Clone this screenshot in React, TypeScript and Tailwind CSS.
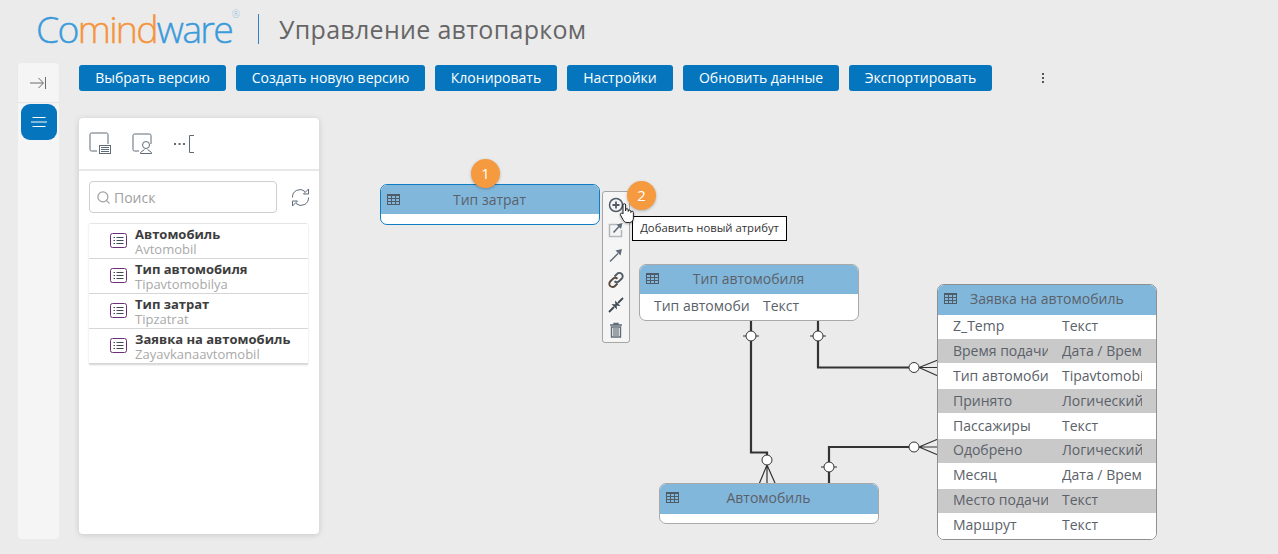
import { Search } from "lucide-react";

const toolbarButtons = [
  { label: "Выбрать версию", width: "w-[147px]" },
  { label: "Создать новую версию", width: "w-[189px]" },
  { label: "Клонировать", width: "w-[122px]" },
  { label: "Настройки", width: "w-[106px]" },
  { label: "Обновить данные", width: "w-[156px]" },
  { label: "Экспортировать", width: "w-[143px]" },
];

const templates = [
  { name: "Автомобиль", alias: "Avtomobil" },
  { name: "Тип автомобиля", alias: "Tipavtomobilya" },
  { name: "Тип затрат", alias: "Tipzatrat" },
  { name: "Заявка на автомобиль", alias: "Zayavkanaavtomobil" },
];

const requestRows = [
  ["Z_Temp", "Текст"],
  ["Время подачи", "Дата / Время"],
  ["Тип автомобиля", "Tipavtomobilya"],
  ["Принято", "Логический"],
  ["Пассажиры", "Текст"],
  ["Одобрено", "Логический"],
  ["Месяц", "Дата / Время"],
  ["Место подачи", "Текст"],
  ["Маршрут", "Текст"],
];

function TableIcon() {
  return (
    <svg width="13" height="11" viewBox="0 0 13 11" fill="none" stroke="#4f5b66" strokeWidth="1" className="shrink-0">
      <rect x="0.5" y="0.5" width="12" height="10" />
      <path d="M0.5 1.5H12.5M0.5 4.5H12.5M0.5 7.5H12.5M4.5 0.5V10.5M8.5 0.5V10.5" />
    </svg>
  );
}

function ListIcon() {
  return (
    <svg width="18" height="16" viewBox="0 0 18 16" fill="none" className="shrink-0">
      <rect x="0.5" y="0.5" width="16" height="14" rx="2" stroke="#6b2f78" />
      <path d="M6.5 4.5H13.5M6.5 7.5H13.5M6.5 10.5H13.5" stroke="#3f4a55" />
      <path d="M3.5 4.5H5M3.5 7.5H5M3.5 10.5H5" stroke="#3f4a55" />
    </svg>
  );
}

function Wires() {
  const line = "#333";
  const circles = [
    [751, 336],
    [818, 336],
    [829, 467],
  ];
  const ends = [
    [767, 460],
    [914, 367.5],
    [914, 447],
  ];
  return (
    <svg width="1278" height="554" className="absolute left-0 top-0" fill="none">
      <path d="M751 320V452.5H767V460" stroke={line} strokeWidth="2.2" />
      <path d="M818 320V367.5H914" stroke={line} strokeWidth="2.2" />
      <path d="M829 483V447H914" stroke={line} strokeWidth="2.2" />
      <path d="M767 465L759.5 483M767 465V483M767 465L775 483" stroke={line} strokeWidth="1.2" />
      <path d="M919 367.5L938 360M919 367.5H938M919 367.5L938 376" stroke={line} strokeWidth="1.2" />
      <path d="M919 447L938 439M919 447H938M919 447L938 455" stroke={line} strokeWidth="1.2" />
      {circles.map(([x, y]) => (
        <g key={x}>
          <path d={`M${x - 8} ${y}H${x + 8}`} stroke={line} />
          <circle cx={x} cy={y} r="5" fill="#fff" stroke={line} />
        </g>
      ))}
      {ends.map(([x, y]) => (
        <circle key={x + y} cx={x} cy={y} r="5" fill="#fff" stroke={line} />
      ))}
    </svg>
  );
}

function Toolbox() {
  const c = "#5f6b76";
  return (
    <div className="absolute left-[602px] top-[191px] w-[28px] h-[152px] rounded-[3px] border border-[#a5a5a5] bg-[#f5f5f5] flex flex-col items-center pt-[3px] gap-[5px]">
      <svg width="20" height="20" viewBox="0 0 20 20" fill="none" stroke="#4f5b66" strokeWidth="1.5">
        <circle cx="10" cy="10" r="6.5" />
        <path d="M6.5 10H13.5M10 6.5V13.5" strokeWidth="1.8" />
      </svg>
      <svg width="20" height="20" viewBox="0 0 20 20" fill="none">
        <path d="M15.5 10V16.5H3.5V4.5H11" stroke="#b4b8bb" strokeWidth="1.5" />
        <path d="M7.5 12.5L13 6.5" stroke={c} strokeWidth="1.6" />
        <path d="M16.5 3L15 9L10.5 4.5Z" fill={c} />
      </svg>
      <svg width="20" height="20" viewBox="0 0 20 20" fill="none">
        <path d="M4 16.5L12 8.5" stroke={c} strokeWidth="1.4" />
        <path d="M16 4L14.5 10.5L9.5 5.5Z" fill={c} />
      </svg>
      <svg width="20" height="20" viewBox="0 0 20 20" fill="none" stroke="#4f5b66" strokeWidth="1.9">
        <path d="M8.5 6.5L11 4a3.2 3.2 0 0 1 4.8 4.5L13 11.2a3.2 3.2 0 0 1-4.5 0" />
        <path d="M11.5 13.5L9 16a3.2 3.2 0 0 1-4.8-4.5L7 8.8a3.2 3.2 0 0 1 4.5 0" stroke="#5d4a3f" />
      </svg>
      <svg width="20" height="20" viewBox="0 0 20 20" fill="none" stroke="#3f4a55">
        <path d="M3 17L8 12M12 8L17 3" strokeWidth="1.8" />
        <path d="M9.5 10.5L9 5.5L14.5 11Z" fill="#3f4a55" stroke="none" />
        <path d="M10.5 9.5L11 14.5L5.5 9Z" fill="#3f4a55" stroke="none" />
      </svg>
      <svg width="20" height="20" viewBox="0 0 20 20" fill="none" stroke={c}>
        <path d="M4 5H16M8 5V3.5H12V5" strokeWidth="1.4" />
        <path d="M5.5 7H14.5V17H5.5Z" strokeWidth="1.4" />
        <path d="M8 8V16M10 8V16M12 8V16" strokeWidth="1.2" />
      </svg>
    </div>
  );
}

export default function App() {
  return (
    <div className="relative w-[1278px] h-[554px] overflow-hidden bg-[#ebebeb] font-['Open_Sans',sans-serif] text-[#5b6169]">
      <header className="h-[63px] flex items-center pl-[36px] pb-[5px]">
        <div className="relative text-[37.5px] leading-none tracking-[-1.75px] font-light text-[#3b9ada] pr-[4px] [-webkit-text-stroke:0.4px]">
          Co<span className="text-[#f5943c]">mind</span>ware
          <span className="absolute right-[-4px] top-[-1px] text-[10px] tracking-normal text-[#8fbfe0] [-webkit-text-stroke:0px]">®</span>
        </div>
        <div className="ml-[22px] w-px h-[30px] bg-[#2b83c4]" />
        <div className="ml-[20px] text-[25px] leading-none tracking-[0.3px] text-[#666]">Управление автопарком</div>
      </header>

      <div className="flex pl-[18px]">
        <aside className="w-[41px] h-[476px] rounded-[4px] bg-[#f5f5f5] flex flex-col items-center">
          <div className="w-full h-[39px] flex items-center justify-center shadow-[0_1px_1px_rgba(0,0,0,0.06)]">
            <svg width="17" height="14" viewBox="0 0 17 14" fill="none" stroke="#6b6b6b">
              <path d="M0 7H13M8.5 2L13.5 7L8.5 12" />
              <path d="M15.5 1V13" />
            </svg>
          </div>
          <button className="mt-[2px] w-[36px] h-[36px] rounded-[9px] bg-[#0575bd] flex items-center justify-center">
            <svg width="16" height="12" viewBox="0 0 16 12" fill="none" stroke="#fff">
              <path d="M1.5 1.5H14.5M0 6H16M1.5 10.5H14.5" />
            </svg>
          </button>
        </aside>

        <div className="ml-[20px] flex-1">
          <div className="flex items-center gap-[10px] pt-[2px]">
            {toolbarButtons.map((b) => (
              <button
                key={b.label}
                className={`${b.width} h-[26px] rounded-[3px] bg-[#0575bd] text-white text-[14px] leading-none`}
              >
                {b.label}
              </button>
            ))}
            <svg width="4" height="12" viewBox="0 0 4 12" className="ml-[39px]" fill="#555">
              <rect x="1" y="1" width="2" height="2" />
              <rect x="1" y="5" width="2" height="2" />
              <rect x="1" y="9" width="2" height="2" />
            </svg>
          </div>

          <section className="mt-[27px] w-[240px] h-[416px] rounded-[4px] bg-white shadow-[0_1px_6px_rgba(0,0,0,0.15)]">
            <div className="h-[53px] border-b-2 border-[#e8e8e8] flex items-center pl-[10px] gap-[20px]">
              <svg width="23" height="23" viewBox="0 0 23 23" fill="none">
                <path d="M8 19H2.5A1.5 1.5 0 0 1 1 17.5V2.5A1.5 1.5 0 0 1 2.5 1H17.5A1.5 1.5 0 0 1 19 2.5V12" stroke="#5f6b76" />
                <rect x="10.5" y="13.5" width="11" height="8" fill="#fff" stroke="#5f6b76" />
                <path d="M12 15.5H20M12 17.5H20M12 19.5H20" stroke="#5f6b76" />
              </svg>
              <svg width="21" height="21" viewBox="0 0 21 21" fill="none" stroke="#5f6b76">
                <path d="M7 18H2.5A1.5 1.5 0 0 1 1 16.5V2.5A1.5 1.5 0 0 1 2.5 1H17.5A1.5 1.5 0 0 1 19 2.5V11" />
                <circle cx="14" cy="12" r="3.5" />
                <path d="M8.5 20.5V19.5L12.5 16.5M19.5 20.5V19.5L15.5 16.5M8.5 20.5H19.5" />
              </svg>
              <svg width="22" height="20" viewBox="0 0 22 20" fill="none">
                <path d="M1 10H3M5.5 10H7.5M10 10H12" stroke="#5f6b76" strokeWidth="2" />
                <path d="M21 1.5H16.5V18.5H21" stroke="#5f6b76" />
              </svg>
            </div>

            <div className="pl-[10px] pt-[10px] flex items-center">
              <div className="w-[188px] h-[32px] shrink-0 rounded-[4px] border border-[#cfcfcf] flex items-center pl-[6px] gap-[3px] text-[14px] text-[#a0a0a0]">
                <Search size={15} strokeWidth={2} className="text-[#a0a0a0]" />
                Поиск
              </div>
              <svg width="19" height="19" viewBox="0 0 19 19" fill="none" stroke="#5f6b76" className="ml-[14px] shrink-0">
                <path d="M1.5 9.5A7.5 7.5 0 0 1 14 3.5M17.5 9.5A7.5 7.5 0 0 1 5 15.5" />
                <path d="M17.5 1V6H12.5ZM1.5 18V13H6.5Z" />
              </svg>
            </div>

            <ul className="mt-[10px] ml-[10px] w-[219px] rounded-t-[2px] border-t border-[#e6e6e6] shadow-[0_1px_2px_rgba(0,0,0,0.18)]">
              {templates.map((t) => (
                <li key={t.alias} className="h-[35px] flex items-center pl-[21px] border-b border-[#d6d6d6]">
                  <ListIcon />
                  <div className="ml-[7px] leading-[15px] pt-[2px]">
                    <div className="text-[13px] font-bold text-[#3d3d3d]">{t.name}</div>
                    <div className="text-[13px] text-[#a9a9a9]">{t.alias}</div>
                  </div>
                </li>
              ))}
            </ul>
          </section>
        </div>
      </div>

      <Wires />

      {/* Тип затрат */}
      <div className="absolute left-[380px] top-[184px] w-[220px] h-[41px] rounded-[7px] border border-[#0f7cc4] bg-white overflow-hidden">
        <div className="h-[29px] bg-[#82b7dc] flex items-center pl-[6px] text-[14px]">
          <TableIcon />
          <span className="flex-1 text-center pr-[20px]">Тип затрат</span>
        </div>
      </div>

      {/* Тип автомобиля */}
      <div className="absolute left-[639px] top-[264px] w-[220px] h-[57px] rounded-[7px] border border-[#a9a9a9] bg-white overflow-hidden">
        <div className="h-[29px] bg-[#82b7dc] flex items-center pl-[6px] pb-[2px] text-[14px]">
          <TableIcon />
          <span className="flex-1 text-center pr-[20px]">Тип автомобиля</span>
        </div>
        <div className="flex h-[26px] items-center pl-[14px] pb-[4px] text-[14px]">
          <span className="block w-[95px] mr-[14px] overflow-hidden whitespace-nowrap">Тип автомобиля</span>
          <span>Текст</span>
        </div>
      </div>

      {/* Автомобиль */}
      <div className="absolute left-[659px] top-[483px] w-[220px] h-[41px] rounded-[7px] border border-[#a9a9a9] bg-white overflow-hidden">
        <div className="h-[30px] bg-[#82b7dc] flex items-center pl-[6px] pb-[3px] text-[14px]">
          <TableIcon />
          <span className="flex-1 text-center pr-[20px]">Автомобиль</span>
        </div>
      </div>

      {/* Заявка на автомобиль */}
      <div className="absolute left-[937px] top-[284px] w-[220px] h-[256px] rounded-[7px] border border-[#8f8f8f] bg-white overflow-hidden text-[14px]">
        <div className="h-[29.5px] bg-[#82b7dc] flex items-center pl-[6px] pb-[2px]">
          <TableIcon />
          <span className="ml-[13px]">Заявка на автомобиль</span>
        </div>
        {requestRows.map(([name, type], i) => (
          <div
            key={name}
            className={`h-[24.9px] flex items-center pl-[15px] pb-[2px] border-b border-white ${i % 2 ? "bg-[#c9c9c9]" : "bg-white"}`}
          >
            <span className="w-[95px] mr-[14px] overflow-hidden whitespace-nowrap">{name}</span>
            <span className="w-[80px] overflow-hidden whitespace-nowrap">{type}</span>
          </div>
        ))}
      </div>

      <Toolbox />

      {/* подсказка и шаги */}
      <div className="absolute left-[632px] top-[216px] w-[155px] h-[25px] border border-black bg-white flex items-center justify-center text-[11.3px] text-[#333]">
        Добавить новый атрибут
      </div>
      <svg width="18" height="24" viewBox="0 0 18 22" className="absolute left-[619px] top-[201px] drop-shadow-[0_1px_1px_rgba(0,0,0,0.3)]" fill="#fff" stroke="#222" strokeWidth="1">
        <path d="M4 12V3a1.3 1.3 0 0 1 2.6 0V9V8a1.3 1.3 0 0 1 2.6 0V9.5a1.3 1.3 0 0 1 2.6 0V10.5a1.3 1.3 0 0 1 2.6 0V16c0 2.5-1.5 4.5-4 4.5H8c-2 0-3-1-4-3L1.5 13c-.8-1.6 1.2-2.6 2.5-1Z" />
      </svg>
      <div className="absolute left-[471px] top-[159px] w-[29px] h-[29px] rounded-full bg-[#f59a3e] text-white flex items-center justify-center text-[15px] shadow-[0_1px_3px_rgba(0,0,0,0.25)]">
        1
      </div>
      <div className="absolute left-[627px] top-[181px] w-[29px] h-[29px] rounded-full bg-[#f59a3e] text-white flex items-center justify-center text-[15px] shadow-[0_1px_3px_rgba(0,0,0,0.25)]">
        2
      </div>
    </div>
  );
}
